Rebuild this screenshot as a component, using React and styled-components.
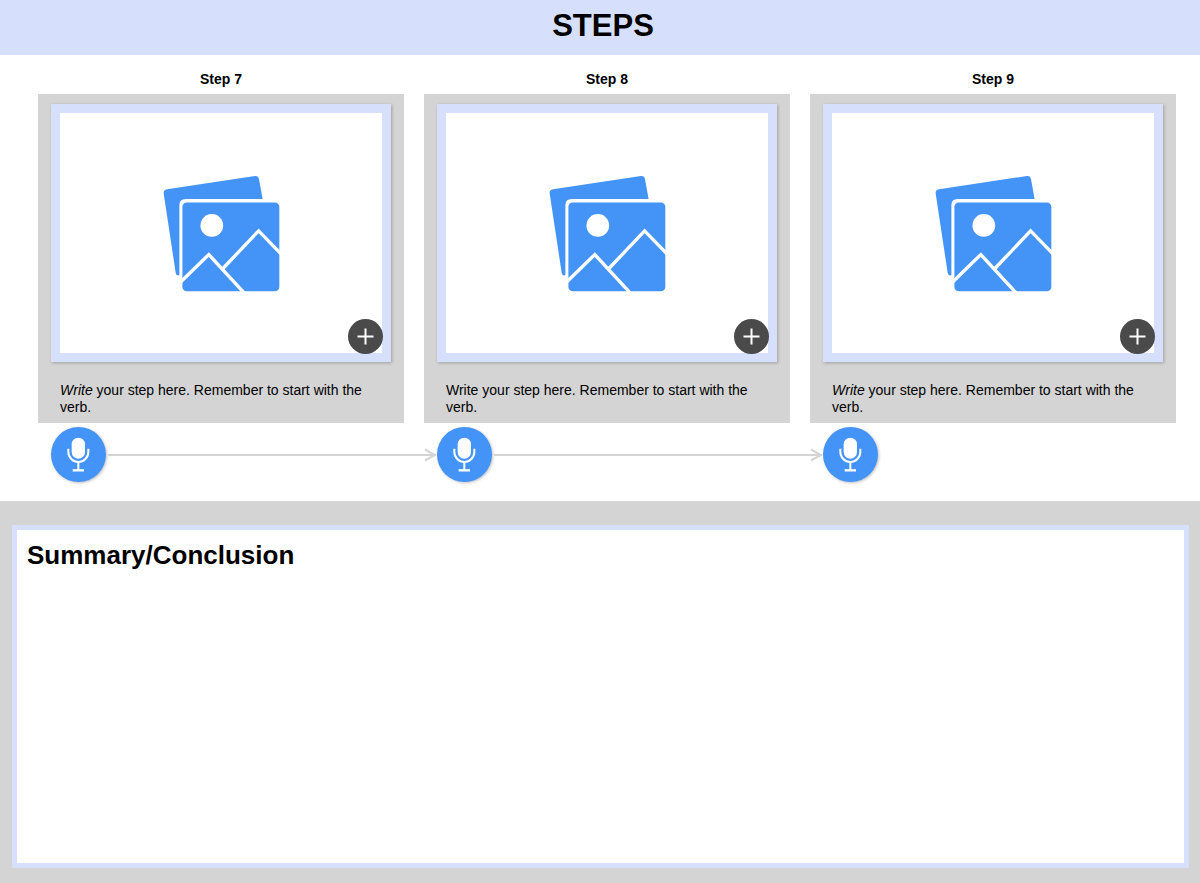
import React from "react";
import styled, { createGlobalStyle } from "styled-components";

const colors = {
  periwinkle: "#d6e0fd",
  gray: "#d4d4d4",
  blue: "#4494f7",
  dark: "#4a4a4a",
};

const GlobalStyle = createGlobalStyle`
  *, *::before, *::after { box-sizing: border-box; }
  body {
    margin: 0;
    background: #fff;
    color: #000;
    font-family: "Liberation Sans", Arial, sans-serif;
  }
`;

const Page = styled.div`
  display: flex;
  flex-direction: column;
  min-height: 100vh;
`;

const Header = styled.header`
  padding: 8px 0 11px 6px;
  background: ${colors.periwinkle};
  text-align: center;
`;

const Title = styled.h1`
  margin: 0;
  font-size: 31px;
  line-height: 36px;
`;

const Columns = styled.div`
  display: grid;
  grid-template-columns: repeat(3, 1fr);
  column-gap: 20px;
  padding: 0 24px 0 38px;
`;

const StepTitle = styled.h2`
  margin: 16px 0 7px;
  font-size: 14px;
  line-height: 16px;
  text-align: center;
`;

const Card = styled.section`
  padding: 10px 13px 7px;
  background: ${colors.gray};
`;

const Frame = styled.div`
  padding: 9px;
  background: ${colors.periwinkle};
  box-shadow: 1px 1px 3px rgba(0, 0, 0, 0.25);
`;

const Picture = styled.div`
  position: relative;
  display: flex;
  align-items: center;
  justify-content: center;
  height: 240px;
  background: #fff;
`;

const AddButton = styled.button`
  position: absolute;
  right: -1px;
  bottom: -1px;
  width: 35px;
  height: 35px;
  padding: 0;
  border: 0;
  border-radius: 50%;
  background: ${colors.dark};
  cursor: pointer;

  svg { display: block; }
`;

const StepText = styled.p`
  margin: 20px 0 0;
  padding: 0 9px;
  font-size: 14px;
  line-height: 17px;
`;

const AudioCell = styled.div`
  display: flex;
  align-items: center;
  padding: 4px 0 19px 13px;
`;

const MicButton = styled.button`
  flex: none;
  width: 55px;
  height: 55px;
  padding: 0;
  border: 0;
  border-radius: 50%;
  background: ${colors.blue};
  box-shadow: 1px 1px 3px rgba(0, 0, 0, 0.25);
  cursor: pointer;

  svg { display: block; }
`;

const Arrow = styled.div`
  display: flex;
  flex: 1;
  align-items: center;
  margin: 0 -32px 0 2px;

  &::before {
    content: "";
    flex: 1;
    height: 2px;
    margin-right: -12px;
    background: ${colors.gray};
  }
`;

const SummaryBand = styled.section`
  display: flex;
  flex: 1;
  padding: 24px 11px 15px 12px;
  background: ${colors.gray};
`;

const SummaryBox = styled.div`
  display: flex;
  flex: 1;
  flex-direction: column;
  border: 5px solid ${colors.periwinkle};
  background: #fff;
`;

const SummaryLabel = styled.label`
  padding: 10px 10px 0;
  font-size: 26px;
  font-weight: bold;
  line-height: 30px;
`;

const SummaryInput = styled.textarea`
  flex: 1;
  padding: 8px 10px;
  border: 0;
  outline: 0;
  background: transparent;
  font: 14px/17px "Liberation Sans", Arial, sans-serif;
  resize: none;
`;

const PhotosIcon = () => (
  <svg width="117" height="117" viewBox="38 30 350 350" aria-hidden="true">
    <path
      fill={colors.blue}
      d="M50 73 L313 33 Q323 31 325 41 L336 102 H106 Q87 102 87 121 V327 Q87 331 84 331 Q77 331 76 323 L40 85 Q39 75 50 73Z"
    />
    <rect x="96" y="112" width="290" height="266" rx="13" fill={colors.blue} />
    <circle cx="184" cy="181" r="34" fill="#fff" />
    <g fill="none" stroke="#fff" strokeWidth="10">
      <path d="M90 351 L175 268 L282 384" />
      <path d="M218 309 L324 197 L392 267" />
    </g>
  </svg>
);

const MicIcon = () => (
  <svg width="55" height="55" viewBox="0 0 165 165" aria-hidden="true">
    <rect x="62" y="32" width="40" height="63" rx="20" fill="#fff" />
    <g fill="none" stroke="#fff" strokeWidth="6">
      <path d="M52 65 V75 A30 30 0 0 0 112 75 V65" />
      <path d="M82 105 V130" />
      <path d="M65 130 H99" strokeWidth="7" />
    </g>
  </svg>
);

const PlusIcon = () => (
  <svg width="35" height="35" viewBox="0 0 70 70" aria-hidden="true">
    <path d="M35 19 V51 M19 35 H51" stroke="#fff" strokeWidth="4" />
  </svg>
);

const ArrowHead = () => (
  <svg width="12" height="14" viewBox="0 0 12 14" aria-hidden="true">
    <path d="M1 1.500 L11 7 L1 12.500" fill="none" stroke={colors.gray} strokeWidth="2" />
  </svg>
);

const steps = [
  { number: 7, emphasis: true },
  { number: 8, emphasis: false },
  { number: 9, emphasis: true },
];

const Step = ({ number, emphasis }) => (
  <div>
    <StepTitle>Step {number}</StepTitle>
    <Card>
      <Frame>
        <Picture>
          <PhotosIcon />
          <AddButton type="button" aria-label={`Add picture to step ${number}`}>
            <PlusIcon />
          </AddButton>
        </Picture>
      </Frame>
      <StepText>
        {emphasis ? <em>Write</em> : "Write"} your step here. Remember to start with the verb.
      </StepText>
    </Card>
  </div>
);

export default function App() {
  return (
    <Page>
      <GlobalStyle />
      <Header>
        <Title>STEPS</Title>
      </Header>
      <main>
        <Columns>
          {steps.map((step) => (
            <Step key={step.number} {...step} />
          ))}
        </Columns>
        <Columns>
          {steps.map(({ number }, index) => (
            <AudioCell key={number}>
              <MicButton type="button" aria-label={`Record step ${number}`}>
                <MicIcon />
              </MicButton>
              {index < steps.length - 1 && (
                <Arrow>
                  <ArrowHead />
                </Arrow>
              )}
            </AudioCell>
          ))}
        </Columns>
      </main>
      <SummaryBand>
        <SummaryBox>
          <SummaryLabel htmlFor="summary">Summary/Conclusion</SummaryLabel>
          <SummaryInput id="summary" />
        </SummaryBox>
      </SummaryBand>
    </Page>
  );
}
